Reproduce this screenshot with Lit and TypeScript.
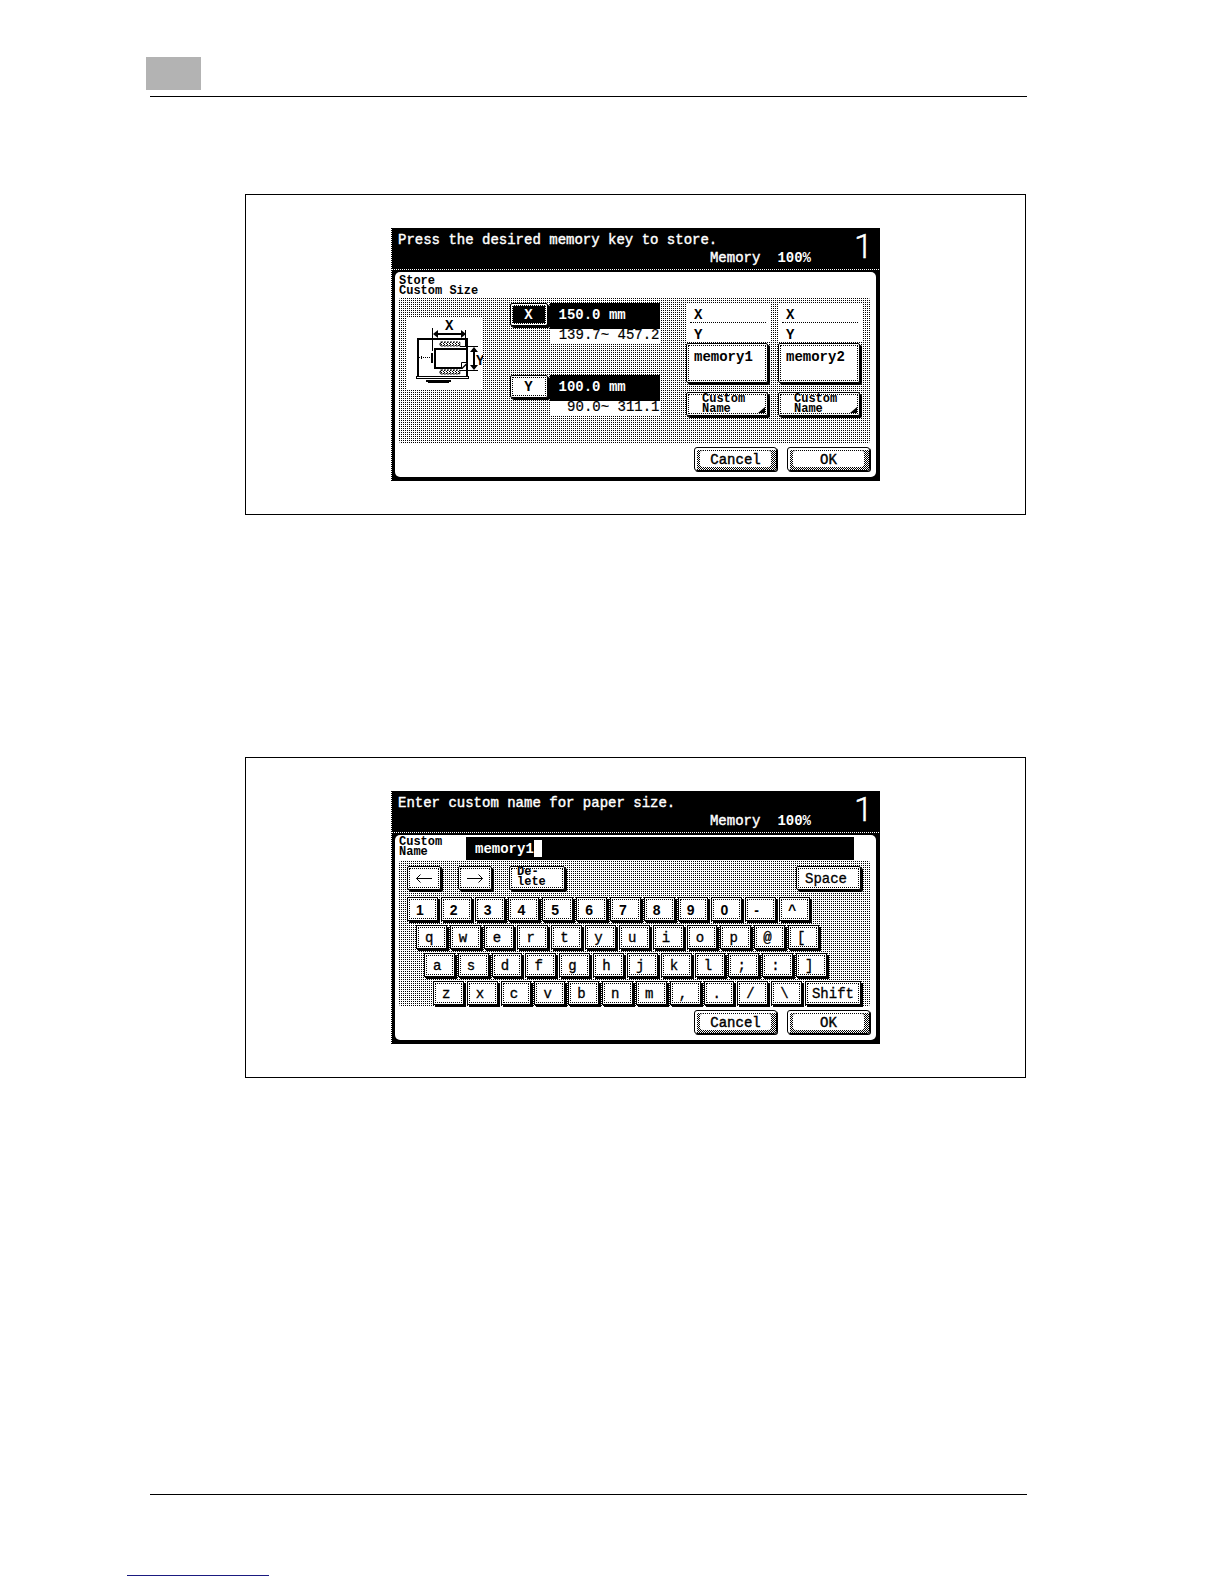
import { LitElement, html, css, svg } from "lit";
import { customElement, property } from "lit/decorators.js";

const base = css`
  * { box-sizing: border-box; }
  .dither {
    background: conic-gradient(#fff 25%, #fff 0 50%, #000 0 75%, #fff 0) 0 0 / 2px 2px;
    border-radius: 4px;
  }
  button {
    font-family: "Liberation Mono", monospace;
    font-size: 14px;
    line-height: 16px;
    font-weight: 400;
    color: #000;
    background: #fff;
    border: 1px solid #000;
    border-radius: 2px;
    padding: 0;
    margin: 0 2px 2px 0;
    box-shadow: 2px 2px 0 #000;
    text-align: left;
    outline: 1px dotted #000;
    outline-offset: -3px;
  }
  .small { font-size: 12px; font-weight: 700; line-height: 10px; }
`;

/** Frame of the touch panel: status header, white work area, Cancel / OK footer. */
@customElement("lcd-screen")
class LcdScreen extends LitElement {
  @property() message = "";

  static styles = [base, css`
    :host {
      display: block;
      width: 100%;
      max-width: 489px;
      font-family: "Liberation Mono", monospace;
    }
    .lcd {
      background: linear-gradient(#000 50%, #fff 0) 0 0 / 1px 2px repeat-y, #000;
      padding: 0 4px 4px;
      color: #fff;
    }
    .head {
      display: flex;
      justify-content: space-between;
      height: 41px;
      padding: 3px 8px 0 3px;
      font-size: 14px;
      line-height: 18px;
      font-weight: 700;
    }
    .status { display: flex; flex-direction: column; flex: 1; }
    .message { margin: 0; font-weight: 400; -webkit-text-stroke: 0.4px #fff; white-space: nowrap; }
    .memory { display: flex; justify-content: flex-end; gap: 17px; padding-right: 47px; }
    .memory .label { font-weight: 400; -webkit-text-stroke: 0.4px #fff; }
    .count {
      font-family: Roboto, sans-serif;
      font-weight: 300;
      -webkit-text-stroke: 0.4px #fff;
      font-size: 34px;
      line-height: 31px;
      width: 14px;
      margin-left: -4px;
    }
    .edge {
      height: 1px;
      margin: 0 -3px 2px;
      background: linear-gradient(90deg, #fff 50%, #000 0) 0 0 / 2px 1px;
    }
    .body { background: #fff; color: #000; border-radius: 5px; padding: 0 6px 0 4px; }
    .foot { display: flex; justify-content: flex-end; gap: 9px; padding-top: 3px; height: 33px; margin-right: -1px; }
    .foot button {
      width: 83px;
      height: 24px;
      margin-right: 1px;
      border-radius: 3px;
      box-shadow: 1px 1px 0 #000;
      outline: none;
      padding: 2px 5px 3px 5px;
      background:
        linear-gradient(#fff, #fff) 0 0 / 2px 100% no-repeat,
        linear-gradient(#fff, #fff) 0 0 / 100% 2px no-repeat,
        conic-gradient(#000 25%, #fff 0 50%, #000 0 75%, #fff 0) 0 0 / 2px 2px;
      display: flex;
    }
    .foot button span {
      flex: 1;
      background: #fff;
      border-top: 1px dotted #000;
      border-radius: 3px;
      text-align: center;
      line-height: 18px;
      -webkit-text-stroke: 0.4px #000;
    }
  `];

  render() {
    return html`
      <section class="lcd">
        <header class="head">
          <div class="status">
            <p class="message">${this.message}</p>
            <div class="memory"><span class="label">Memory</span><span>100%</span></div>
          </div>
          <span class="count">1</span>
        </header>
        <div class="edge"></div>
        <div class="body">
          <slot></slot>
          <div class="foot">
            <button type="button"><span>Cancel</span></button>
            <button type="button"><span>OK</span></button>
          </div>
        </div>
      </section>
    `;
  }
}

const hatch = (y: number) => svg`
  <rect x="33" y=${y} width="20" height="4" rx="1" fill="url(#hatch)" stroke="#000" stroke-width="1" stroke-dasharray="2 1"/>`;

const diagram = svg`
  <svg class="diagram" width="76" height="72" viewBox="0 0 76 72" role="img" aria-label="X and Y">
    <defs>
      <pattern id="hatch" width="3" height="2" patternUnits="userSpaceOnUse">
        <path d="M0 0h1v1H0zM1 1h1v1H1z" fill="#000"/>
      </pattern>
    </defs>
    <rect width="76" height="72" fill="#fff"/>
    <g fill="none" stroke="#000" shape-rendering="crispEdges">
      <path d="M11 60V22H60V60" stroke-width="2"/>
      <path d="M9 59.5H62M9 61.5H62" stroke-width="1"/>
      <path d="M9.500 59V62M61.500 59V62"/>
      <path d="M19 64H44" stroke-width="2"/>
      <path d="M21 65.500H42"/>
      <path d="M25.500 11V34M58.500 13V30"/>
      <path d="M28 17H57" stroke-width="2"/>
      <path d="M53 29.500H71M53 53.500H71"/>
      <path d="M67 33V50" stroke-width="2"/>
      <path d="M12 40.500H24" stroke-dasharray="1 1"/>
      <path d="M14.500 39V42"/>
      <path d="M25 36V46" stroke-width="2"/>
    </g>
    ${hatch(25)}${hatch(53)}
    <path d="M28 32H60V46L55 51H28Z" fill="#fff" stroke="#000" stroke-width="2"/>
    <path d="M54.500 51V45.500H60" fill="#fff" stroke="#000"/>
    <path d="M26 17l5-4v8zM59 17l-5-4v8zM67 30l-4 5h8zM67 53l-4-5h8z"/>
    <text x="38" y="13" font-size="14">X</text>
    <text x="69" y="48" font-size="14">Y</text>
  </svg>`;

/** Screen for storing a custom paper size. */
@customElement("store-size")
class StoreSize extends LitElement {
  static styles = [base, css`
    :host { display: block; font-family: "Liberation Mono", monospace; font-size: 14px; }
    .title { margin: 0; padding-top: 4px; height: 25px; }
    .area {
      display: flex;
      justify-content: space-between;
      align-items: flex-start;
      height: 147px;
      padding: 6px 8px 0;
    }
    .diagram { display: block; margin: 14px 0 0; font-weight: 700; }
    .fields { display: flex; flex-direction: column; gap: 31px; width: 150px; }
    .field { display: grid; grid-template-columns: 40px 1fr; }
    .axis { width: 38px; height: 23px; text-align: center; font-weight: 700; outline-offset: -3px; }
    .axis.on { background: #000; color: #fff; outline-color: #fff; border-color: #000; box-shadow: inset 0 0 0 1px #fff, 2px 2px 0 #000; }
    .value {
      background: #000;
      color: #fff;
      height: 26px;
      line-height: 24px;
      padding-left: 9px;
      font-weight: 700;
      white-space: nowrap;
    }
    .range {
      grid-column: 2;
      background: #fff;
      height: 15px;
      line-height: 13px;
      font-size: 14px;
      text-align: right;
      white-space: pre;
      -webkit-text-stroke: 0.2px #000;
    }
    .slots { display: flex; gap: 8px; }
    .slot { width: 84px; display: flex; flex-direction: column; }
    .xy { background: #fff; padding: 0 4px; margin: 0 0 1px; font-weight: 700; height: 39px; }
    .xy div { padding-left: 4px; height: 20px; line-height: 24px; }
    .store { height: 40px; padding: 5px 0 0 7px; font-weight: 700; display: flex; }
    .name {
      height: 24px;
      margin-top: 7px;
      display: flex;
      padding: 1px 2px 2px 15px;
      justify-content: space-between;
    }
    .xy div:first-child { border-bottom: 1px dotted #000; }
    .arrow { width: 7px; height: 6px; align-self: flex-end; background: #000; clip-path: polygon(100% 0, 100% 100%, 0 100%); }
  `];

  private field(axis: string, on: boolean, value: string, range: string) {
    return html`
      <div class="field">
        <button type="button" class="axis ${on ? "on" : ""}" aria-pressed=${on}>${axis}</button>
        <div class="value">${value} mm</div>
        <div class="range">${range}</div>
      </div>`;
  }

  private slotFor(name: string) {
    return html`
      <div class="slot">
        <div class="xy"><div>X</div><div>Y</div></div>
        <button type="button" class="store">${name}</button>
        <button type="button" class="name small">
          <span>Custom<br />Name</span><span class="arrow"></span>
        </button>
      </div>`;
  }

  render() {
    return html`
      <h2 class="title small">Store<br />Custom Size</h2>
      <div class="area dither">
        ${diagram}
        <div class="fields">
          ${this.field("X", true, "150.0", "139.7~ 457.2")}
          ${this.field("Y", false, "100.0", "90.0~ 311.1")}
        </div>
        <div class="slots">${this.slotFor("memory1")}${this.slotFor("memory2")}</div>
      </div>
    `;
  }
}

const ROWS = ["1234567890-^", "qwertyuiop@[", "asdfghjkl;:]", "zxcvbnm,./\\"];

/** On-screen keyboard for naming a custom size. */
@customElement("name-keyboard")
class NameKeyboard extends LitElement {
  static styles = [base, css`
    :host { display: block; font-family: "Liberation Mono", monospace; font-size: 14px; }
    .entry { display: flex; height: 25px; padding-top: 2px; }
    .entry label { width: 67px; }
    .box { flex: 1; margin-right: 16px; background: #000; display: flex; align-items: center; padding-left: 9px; }
    .box input {
      width: 59px;
      height: 18px;
      border: 0;
      padding: 0;
      background: none;
      color: #fff;
      font: inherit;
      font-weight: 700;
      outline: none;
    }
    .cursor { width: 8px; height: 17px; background: #fff; }
    .area { height: 147px; padding: 6px 8px 0; display: flex; flex-direction: column; }
    .tools { display: flex; gap: 15px; height: 31px; }
    .tools button, .row button { height: 24px; }
    .tools .move { width: 34px; display: grid; place-items: center; }
    .tools .delete { width: 56px; padding-left: 7px; padding-bottom: 2px; }
    .tools .space { width: 65px; margin: 0 1px 0 auto; padding: 2px 0 0 8px; -webkit-text-stroke: 0.3px #000; }
    .row { display: flex; height: 28px; }
    .row:nth-child(2) { padding-right: 49px; }
    .row:nth-child(3) { padding: 0 40px 0 9px; }
    .row:nth-child(4) { padding: 0 32px 0 17px; }
    .row:nth-child(5) { padding-left: 26px; height: 26px; }
    .row button {
      flex: 1;
      margin-right: 3px;
      padding: 2px 0 0 8px;
      border-radius: 0;
      -webkit-text-stroke: 0.3px #000;
    }
    .row:nth-child(2) button { font-family: "Liberation Sans", sans-serif; font-weight: 700; -webkit-text-stroke: 0; }
    .row .shift { flex: none; width: 56px; margin-right: 1px; padding-left: 6px; }
  `];

  private key(k: string) {
    return html`<button type="button">${k}</button>`;
  }

  render() {
    return html`
      <div class="entry">
        <label class="small" for="name">Custom<br />Name</label>
        <div class="box"><input id="name" value="memory1" /><span class="cursor"></span></div>
      </div>
      <div class="area dither">
        <div class="tools">
          <button type="button" class="move" aria-label="Left">
            <svg width="16" height="9" fill="none" stroke="#000"><path d="M0.500 4.500H16M4.500 0.500L0.500 4.500L4.500 8.500" /></svg>
          </button>
          <button type="button" class="move" aria-label="Right">
            <svg width="16" height="9" fill="none" stroke="#000"><path d="M0 4.500H15.500M11.500 0.500L15.500 4.500L11.500 8.500" /></svg>
          </button>
          <button type="button" class="delete small">De-<br />lete</button>
          <button type="button" class="space">Space</button>
        </div>
        ${ROWS.map((row, i) => html`
          <div class="row">
            ${[...row].map((k) => this.key(k))}
            ${i === 3 ? html`<button type="button" class="shift">Shift</button>` : ""}
          </div>`)}
      </div>
    `;
  }
}

@customElement("app-root")
class AppRoot extends LitElement {
  static styles = [base, css`
    :host { display: block; background: #fff; }
    .page { padding: 57px 197px 0 150px; }
    .tab { width: 55px; height: 33px; margin: 0 0 6px -4px; background: #b3b3b3; }
    .rule { height: 1px; border: 0; margin: 0; background: #000; }
    .figure {
      margin: 97px 1px 0 95px;
      border: 1px solid #000;
      padding: 33px 0;
      display: flex;
      justify-content: center;
    }
    .figure + .figure { margin-top: 242px; }
    .end { margin-top: 416px; }
    .underline { width: 142px; height: 1px; margin: 80px 0 0 -23px; background: #1a1a80; }
  `];

  render() {
    return html`
      <main class="page">
        <div class="tab"></div>
        <hr class="rule" />
        <figure class="figure">
          <lcd-screen message="Press the desired memory key to store."><store-size></store-size></lcd-screen>
        </figure>
        <figure class="figure">
          <lcd-screen message="Enter custom name for paper size."><name-keyboard></name-keyboard></lcd-screen>
        </figure>
        <hr class="rule end" />
        <div class="underline"></div>
      </main>
    `;
  }
}
